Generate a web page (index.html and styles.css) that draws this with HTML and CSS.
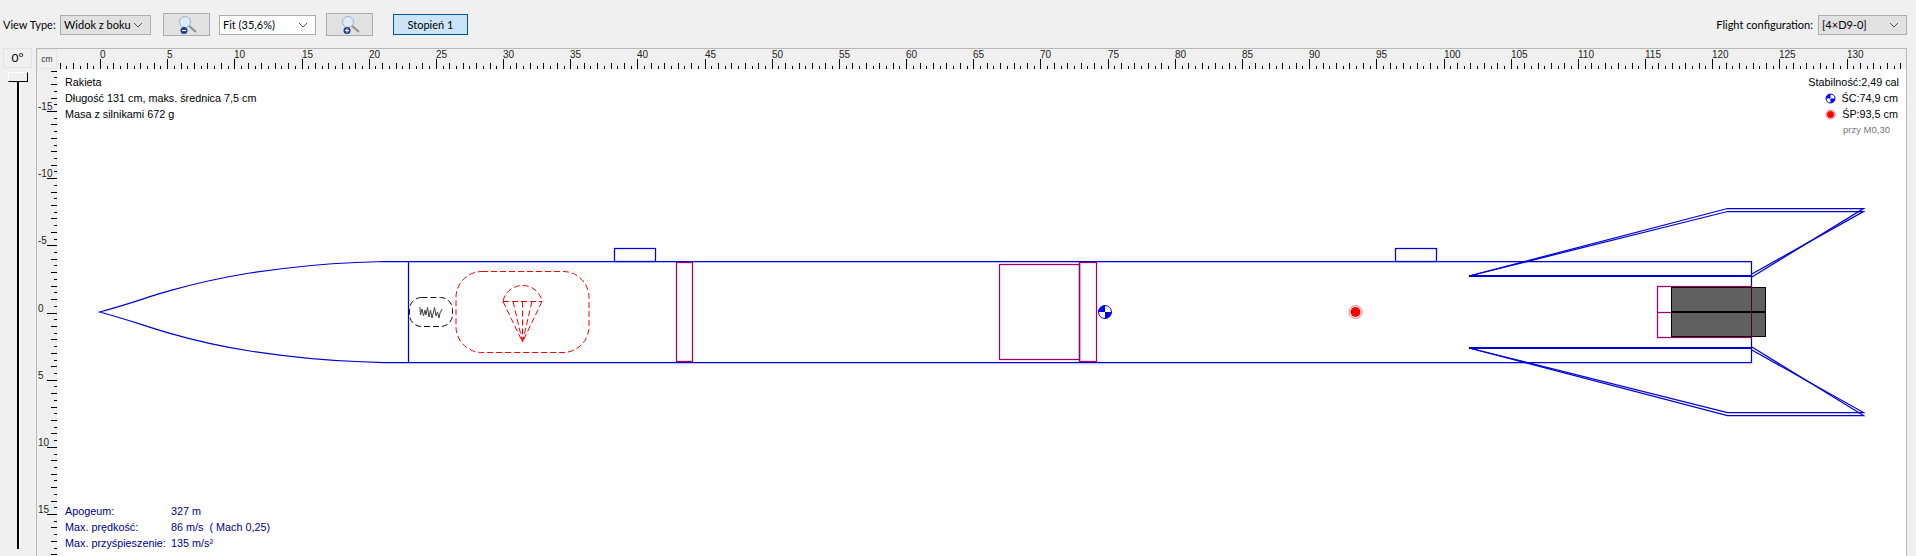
FILE: index.html
```html
<!DOCTYPE html>
<html lang="pl">
<head>
<meta charset="UTF-8" />
<title>Rocket design</title>
<link rel="stylesheet" href="styles.css">
</head>
<body>
  <div class="toolbar">
    <span class="label label-view">View Type:</span>
    <div class="combo combo-view">Widok z boku
      <svg class="chevron" width="10" height="6"><path d="M1 1l4 4 4-4" /></svg>
    </div>
    <button class="zoom-btn zoom-out">
      <svg width="20" height="20" viewBox="0 0 20 20">
        <line class="mag-handle" x1="11" y1="10" x2="19" y2="17" />
        <circle class="mag-glass" cx="8" cy="7" r="5.5" />
        <circle class="mag-badge" cx="7" cy="15.5" r="3.5" />
        <line class="mag-sign" x1="5" y1="15.5" x2="9" y2="15.5" />
      </svg>
    </button>
    <div class="combo combo-zoom">Fit (35,6%)
      <svg class="chevron" width="10" height="6"><path d="M1 1l4 4 4-4" /></svg>
    </div>
    <button class="zoom-btn zoom-in">
      <svg width="20" height="20" viewBox="0 0 20 20">
        <line class="mag-handle" x1="11" y1="10" x2="19" y2="17" />
        <circle class="mag-glass" cx="8" cy="7" r="5.5" />
        <circle class="mag-badge" cx="7" cy="15.5" r="3.5" />
        <line class="mag-sign" x1="5" y1="15.5" x2="9" y2="15.5" />
        <line class="mag-sign" x1="7" y1="13.5" x2="7" y2="17.5" />
      </svg>
    </button>
    <button class="stage-btn">Stopień 1</button>
    <span class="label label-flight">Flight configuration:</span>
    <div class="combo combo-flight">[4×D9-0]
      <svg class="chevron" width="10" height="6"><path d="M1 1l4 4 4-4" /></svg>
    </div>
  </div>

  <div class="workspace">
    <div class="rotation">
      <div class="angle">0°</div>
      <div class="slider">
        <div class="slider-thumb"></div>
        <div class="slider-track"></div>
      </div>
    </div>

    <div class="panel">
      <div class="corner">cm</div>
      <svg class="ruler ruler-x" id="rulerX" viewBox="57 49 1849 20"></svg>
      <svg class="ruler ruler-y" id="rulerY" viewBox="37 69 20 487"></svg>
      <div class="canvas">
        <!-- viewBox keeps the drawing in page coordinates -->
        <svg class="rocket" viewBox="57 69 1849 487">
          <!-- nose cone and body tube -->
          <g class="blue">
            <path d="M99.5 312 C130 304 150 296 170 290.7 C200 282 225 277 250 273 C290 267 330 263.5 356 262.5 L384 261.5 L1751.5 261.5 L1751.5 362.5 L384 362.5 L356 361.5 C330 360.5 290 357 250 351 C225 347 200 342 170 333.3 C150 328 130 320 99.5 312 Z" />
            <line x1="408.5" y1="261.5" x2="408.5" y2="362.5" />
            <line x1="1079.5" y1="261.5" x2="1079.5" y2="362.5" />
            <!-- launch lugs -->
            <rect x="614.5" y="248.5" width="41" height="13" />
            <rect x="1395.5" y="248.5" width="41" height="13" />
            <!-- fins -->
            <path d="M1469 276 L1727.5 208.5 L1863.5 208.5 L1752 277" />
            <path d="M1469 276 L1727.5 211.5 L1863.5 211.5 L1751 274.5" />
            <path d="M1469 348 L1727.5 415.5 L1863.5 415.5 L1752 347" />
            <path d="M1469 348 L1727.5 412.5 L1863.5 412.5 L1751 349.5" />
            <line class="fin-root" x1="1469" y1="276" x2="1751.5" y2="276" />
            <line class="fin-root" x1="1469" y1="348" x2="1751.5" y2="348" />
          </g>
          <!-- inner tubes and rings -->
          <g class="purple">
            <rect x="676.5" y="262.5" width="16" height="99" />
            <rect x="999.5" y="264.5" width="80" height="95" />
            <rect x="1079.5" y="262.5" width="17" height="99" />
            <rect x="1657.5" y="286.5" width="94" height="51" />
            <line x1="1657.5" y1="312.5" x2="1671" y2="312.5" />
          </g>
          <!-- motor -->
          <rect class="motor" x="1671.5" y="287.5" width="94" height="49" />
          <line class="motor-split" x1="1671" y1="312" x2="1766" y2="312" />
          <line class="motor-over" x1="1751.5" y1="287" x2="1751.5" y2="337" />
          <!-- shock cord -->
          <rect class="dash-black" x="409.5" y="297.5" width="43" height="29" rx="12" />
          <path class="cord" d="M420 307 L420.5 315 L422 309 L423.5 316 L425 310 L426 315 L427.5 307.5 L429 317 L430.5 310 L432 318 L433 314 L434.5 307.5 L436 316 L437.5 312 L439 318 L440 313 L442 309" />
          <!-- parachute -->
          <g class="dash-red">
            <rect x="456" y="271.5" width="133" height="81" rx="26" />
            <path d="M503 301 A20 20 0 0 1 542 301" />
            <line x1="503" y1="301.5" x2="542" y2="301.5" />
            <line x1="503" y1="301.5" x2="522.5" y2="342" />
            <line x1="513" y1="301.5" x2="522.5" y2="342" />
            <line x1="522.5" y1="301.5" x2="522.5" y2="342" />
            <line x1="532" y1="301.5" x2="522.5" y2="342" />
            <line x1="542" y1="301.5" x2="522.5" y2="342" />
          </g>
          <!-- centre of gravity -->
          <circle class="cg-ring" cx="1105" cy="312" r="6.5" />
          <path class="cg-fill" d="M1105 312 L1105 305.5 A6.5 6.5 0 0 0 1098.5 312 Z M1105 312 L1105 318.5 A6.5 6.5 0 0 0 1111.5 312 Z" />
          <!-- centre of pressure -->
          <circle class="cp-ring" cx="1355.5" cy="312" r="6.5" />
          <circle class="cp-dot" cx="1355.5" cy="312" r="5" />
        </svg>

        <div class="info info-design">
          <div>Rakieta</div>
          <div>Długość 131 cm, maks. średnica 7,5 cm</div>
          <div>Masa z silnikami 672 g</div>
        </div>

        <div class="info info-stability">
          <div>Stabilność:2,49 cal</div>
          <div class="marker-row">
            <svg width="11" height="11" viewBox="0 0 11 11">
              <circle class="cg-ring" cx="5.5" cy="5.5" r="4.5" />
              <path class="cg-fill" d="M5.5 5.5 L5.5 1 A4.5 4.5 0 0 0 1 5.5 Z M5.5 5.5 L5.5 10 A4.5 4.5 0 0 0 10 5.5 Z" />
            </svg>
            <span>ŚC:74,9 cm</span>
          </div>
          <div class="marker-row">
            <svg width="11" height="11" viewBox="0 0 11 11">
              <circle class="cp-ring" cx="5.5" cy="5.5" r="4.5" />
              <circle class="cp-dot" cx="5.5" cy="5.5" r="3.5" />
            </svg>
            <span>ŚP:93,5 cm</span>
          </div>
          <div class="mach">przy M0,30</div>
        </div>

        <div class="info info-flight">
          <span>Apogeum:</span><span>327 m</span>
          <span>Max. prędkość:</span><span>86 m/s &nbsp;( Mach 0,25)</span>
          <span>Max. przyśpieszenie:</span><span>135 m/s²</span>
        </div>
      </div>
    </div>
  </div>
  <script src="script.js"></script>
</body>
</html>
```

FILE: styles.css
```css
* { box-sizing: border-box; }

html, body {
  margin: 0;
  height: 100%;
  overflow: hidden;
}

body {
  display: flex;
  flex-direction: column;
  background: #f0f0f0;
  color: #000;
  font-family: Lato, sans-serif;
  font-size: 11px;
}

/* Toolbar */
.toolbar {
  display: flex;
  align-items: center;
  height: 48px;
  padding: 1px 9px 0 3px;
  flex: none;
}

.label { white-space: nowrap; }
.label-view { width: 57px; }
.label-flight { margin-left: auto; margin-right: 5px; }

.combo {
  display: flex;
  align-items: center;
  justify-content: space-between;
  height: 20px;
  padding: 0 6px 0 3px;
  background: #e1e1e1;
  border: 1px solid #adadad;
  white-space: nowrap;
}
.combo-view { width: 91px; }
.combo-zoom { width: 97px; margin-left: 9px; background: #fff; }
.combo-flight { width: 89px; background: #e1e1e1; }

.chevron { flex: none; margin-right: 1px; }
.chevron path { fill: none; stroke: #555; stroke-width: 1; }

.zoom-btn {
  display: flex;
  align-items: center;
  justify-content: center;
  width: 47px;
  height: 23px;
  padding: 0;
  background: #e1e1e1;
  border: 1px solid #adadad;
}
.zoom-out { margin-left: 12px; }
.zoom-in { margin-left: 10px; }

.mag-handle { stroke: #8f8f8f; stroke-width: 2; }
.mag-glass { fill: #dcecfa; stroke: #9fb4c8; stroke-width: 1; }
.mag-badge { fill: #1f3f8f; }
.mag-sign { stroke: #fff; stroke-width: 1.2; }

.stage-btn {
  width: 75px;
  height: 21px;
  margin-left: 20px;
  padding: 0;
  background: #cce4f7;
  border: 1px solid #005499;
  font: inherit;
  color: #000;
}

/* Main area */
.workspace {
  display: flex;
  flex: 1;
  min-height: 0;
  padding-right: 9px;
}

.rotation {
  width: 36px;
  flex: none;
  padding-left: 3px;
}

.angle {
  width: 29px;
  height: 20px;
  line-height: 18px;
  font-size: 12px;
  text-align: center;
  border: 1px solid #e3e3e3;
}

.slider {
  display: flex;
  flex-direction: column;
  align-items: center;
  width: 21px;
  margin: 4px 0 0 4px;
}
.slider-thumb {
  width: 20px;
  height: 10px;
  background: #f0f0f0;
  border: 1px solid #fff;
  border-right-color: #000;
  border-bottom-color: #000;
}
.slider-track {
  width: 2px;
  height: 467px;
  background: #000;
  box-shadow: 1px 0 0 #fff;
}

.panel {
  display: grid;
  grid-template-columns: 20px 1fr;
  grid-template-rows: 20px 1fr;
  flex: 1;
  min-width: 0;
  border: 1px solid #b9b9b9;
  border-bottom: 0;
}

.corner {
  border: 1px solid #e6e6e6;
  font-family: "Liberation Sans", sans-serif;
  font-size: 8.5px;
  line-height: 18px;
  text-align: center;
  color: #333;
}

.ruler {
  display: block;
  width: 100%;
  height: 100%;
  font-family: "Liberation Sans", sans-serif;
  font-size: 10px;
  fill: #222;
}
.ruler line { stroke: #000; stroke-width: 1; }

.canvas {
  position: relative;
  background: #fff;
  overflow: hidden;
}

.rocket {
  display: block;
  width: 1849px;
  height: 487px;
}

/* Rocket parts */
.blue * { fill: none; stroke: #0000d6; stroke-width: 1.25; }
.blue .fin-root { stroke-width: 2; }
.purple * { fill: none; stroke: #a8005f; stroke-width: 1.25; }
.motor { fill: #606060; stroke: #000; stroke-width: 1; }
.motor-split { stroke: #000; stroke-width: 2; }
.motor-over { stroke: #4d0030; stroke-width: 1; }
.dash-black { fill: none; stroke: #111; stroke-width: 1; stroke-dasharray: 6 3; }
.cord { fill: none; stroke: #444; stroke-width: 1; }
.dash-red * { fill: none; stroke: #f00; stroke-width: 1; stroke-dasharray: 6 3; }

.cg-ring { fill: #fff; stroke: #0000ff; stroke-width: 1; }
.cg-fill { fill: #0000ff; }
.cp-ring { fill: #fff; stroke: #f77; stroke-width: 1; }
.cp-dot { fill: #f00; }

/* Text laid over the drawing */
.info {
  position: absolute;
  font-family: "Liberation Sans", sans-serif;
  font-size: 10.8px;
  line-height: 16px;
  white-space: nowrap;
}

.info-design { left: 8px; top: 5px; }

.info-stability {
  right: 7px;
  top: 5px;
  display: flex;
  flex-direction: column;
  align-items: flex-end;
}
.marker-row {
  display: flex;
  align-items: center;
  gap: 6px;
  padding-right: 1px;
}
.mach {
  padding-right: 9px;
  font-size: 9.5px;
  color: #777;
}

.info-flight {
  left: 8px;
  top: 434px;
  display: grid;
  grid-template-columns: 106px auto;
  color: #00008b;
}
```

FILE: script.js
```js
const SVG_NS = "http://www.w3.org/2000/svg";
const PX_PER_CM = 13.435;
const ZERO_X = 100;
const ZERO_Y = 312.5;

function add(svg, tag, attrs, text) {
  const el = document.createElementNS(SVG_NS, tag);
  for (const k in attrs) el.setAttribute(k, attrs[k]);
  if (text !== undefined) el.textContent = text;
  svg.appendChild(el);
}

// half-cm steps: 0.5 short, 1 medium, 5 long with a label
function tickLen(half) {
  if (half % 10 === 0) return 10;
  return half % 2 === 0 ? 6 : 3;
}

const rulerX = document.getElementById("rulerX");
for (let half = -6; half <= 268; half++) {
  const x = Math.round(ZERO_X + half * PX_PER_CM / 2) + 0.5;
  add(rulerX, "line", { x1: x, x2: x, y1: 69 - tickLen(half), y2: 69 });
  if (half % 10 === 0) add(rulerX, "text", { x: x - 0.5, y: 58 }, half / 2);
}

const rulerY = document.getElementById("rulerY");
for (let half = -36; half <= 36; half++) {
  const y = Math.round(ZERO_Y + half * PX_PER_CM / 2) + 0.5;
  add(rulerY, "line", { x1: 57 - tickLen(half), x2: 57, y1: y, y2: y });
  if (half % 10 === 0) add(rulerY, "text", { x: 38, y: y - 2 }, half / 2);
}
```
